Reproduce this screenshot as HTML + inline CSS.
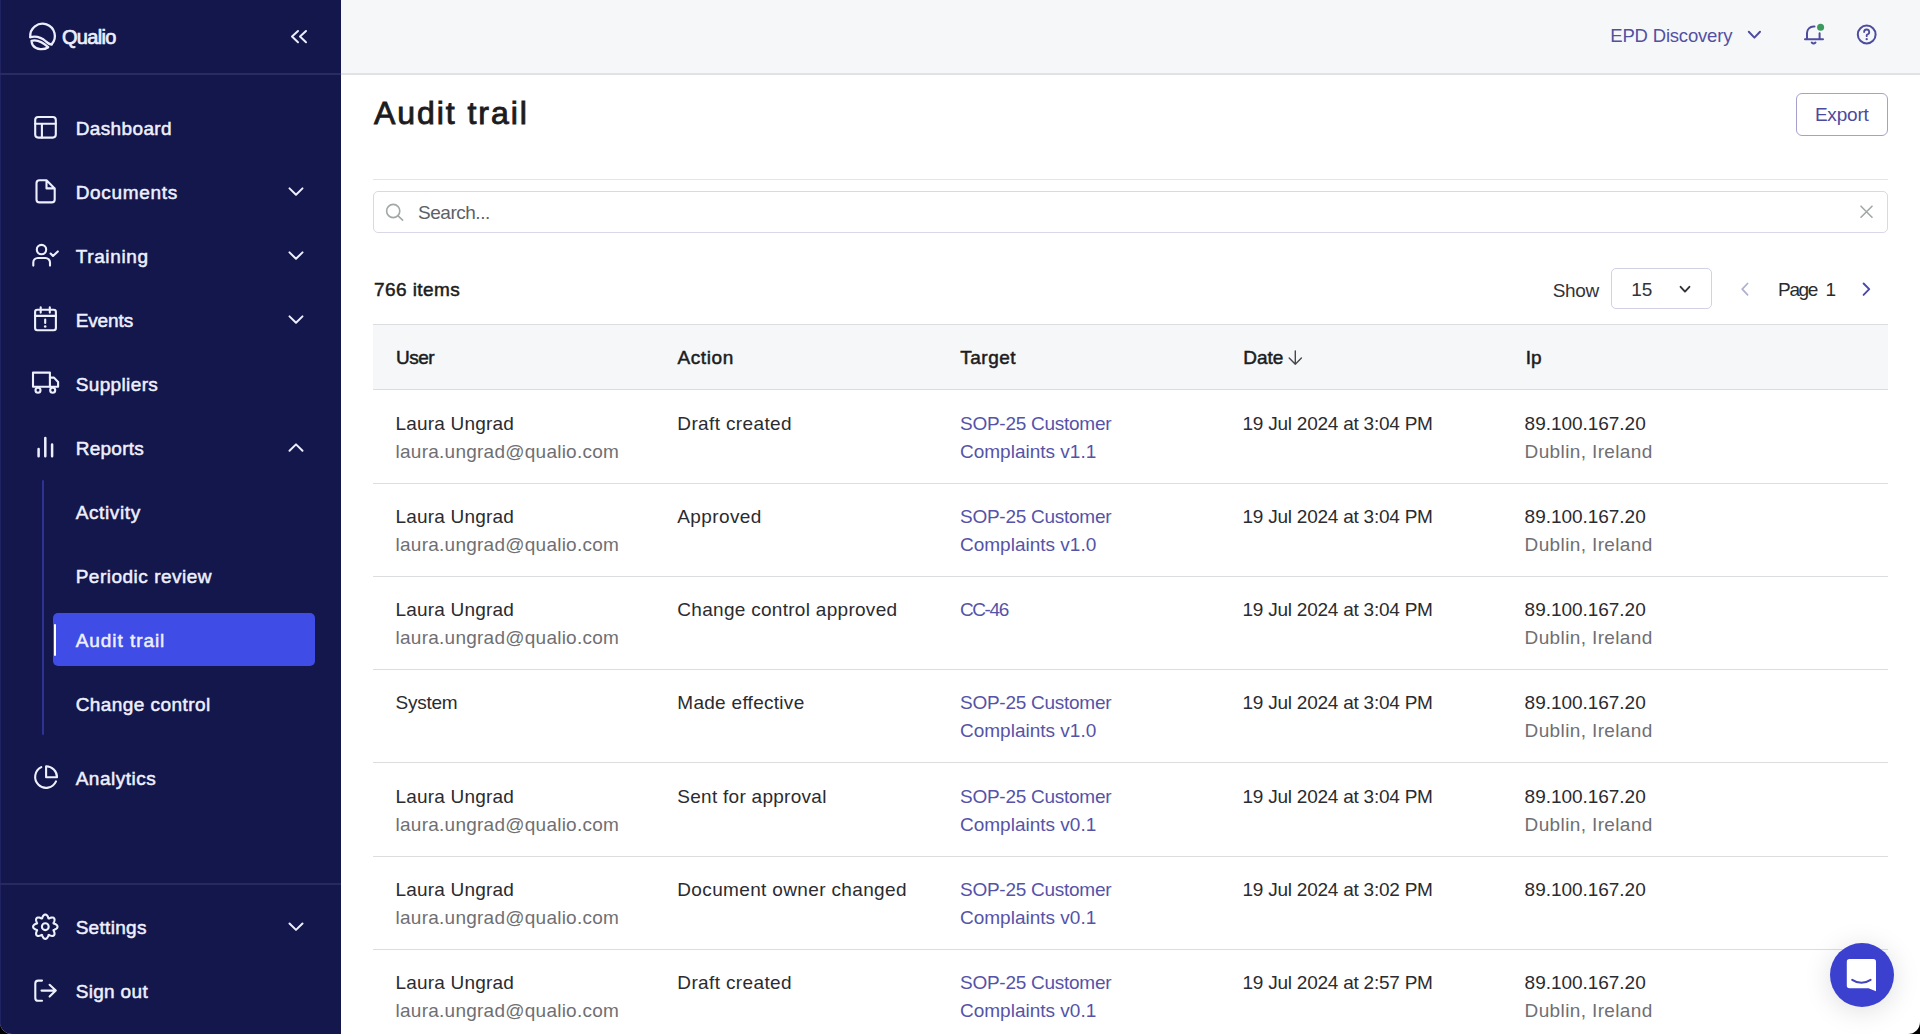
<!DOCTYPE html><html><head><meta charset="utf-8"><title>Audit trail</title><style>
*{margin:0;padding:0;box-sizing:border-box}
html,body{width:1920px;height:1034px;overflow:hidden;background:#000}
body{font-family:"Liberation Sans",sans-serif;position:relative}
#app{position:absolute;left:0;top:0;width:1920px;height:1034px;background:#fff;border-radius:0 0 12px 12px;overflow:hidden}
.t{position:absolute;white-space:nowrap}
.abs{position:absolute}
svg{position:absolute;overflow:visible}
</style></head><body><div id="app">
<div class="abs" style="left:0;top:0;width:341px;height:1034px;background:#14174b"></div>
<div class="abs" style="left:0;top:0;width:1px;height:1034px;background:#1f2362"></div>
<div class="abs" style="left:0;top:73px;width:341px;height:2px;background:#292c61"></div>
<div class="abs" style="left:0;top:883px;width:341px;height:2px;background:#262a5e"></div>
<svg style="left:0;top:0" width="341" height="80" viewBox="0 0 341 80">
<g fill="none" stroke="#eceeff" stroke-width="2.3" stroke-linecap="round" stroke-linejoin="round">
<path d="M30.3,37.2 A12.3,12.3 0 1 1 51.6,44.4"/>
<path d="M30.3,37.2 C36,35.8 42,38 46,41.5 C48.5,43.5 50.5,44.6 51.6,44.4"/>
<path d="M31.5,40.8 C35,39.8 41,40.6 48.2,47.2 C44,50.2 36.5,50 33,45.5 C32,44 31.6,42.5 31.5,40.8 Z"/>
</g></svg>
<div class="t" style="left:61.95px;top:24.07px;font-size:20px;line-height:26px;font-weight:400;color:#eceeff;letter-spacing:-0.680px;-webkit-text-stroke:0.7px #eceeff;">Qualio</div>
<svg style="left:0;top:0" width="341" height="80" viewBox="0 0 341 80">
<g fill="none" stroke="#eceeff" stroke-width="2" stroke-linecap="round" stroke-linejoin="round">
<path d="M298,31 L292,36.6 L298,42.2"/><path d="M306,31 L300,36.6 L306,42.2"/>
</g></svg>
<div class="t" style="left:75.65px;top:116.31px;font-size:19px;line-height:25px;font-weight:400;color:#eef0ff;letter-spacing:0.375px;-webkit-text-stroke:0.5px #eef0ff;">Dashboard</div>
<div class="t" style="left:75.65px;top:180.31px;font-size:19px;line-height:25px;font-weight:400;color:#eef0ff;letter-spacing:0.675px;-webkit-text-stroke:0.5px #eef0ff;">Documents</div>
<svg style="left:0;top:0" width="341" height="1034"><path d="M289.5,188.4 L296,194.8 L302.5,188.4" fill="none" stroke="#eef0ff" stroke-width="2" stroke-linecap="round" stroke-linejoin="round"/></svg>
<div class="t" style="left:75.65px;top:244.31px;font-size:19px;line-height:25px;font-weight:400;color:#eef0ff;letter-spacing:0.643px;-webkit-text-stroke:0.5px #eef0ff;">Training</div>
<svg style="left:0;top:0" width="341" height="1034"><path d="M289.5,252.4 L296,258.8 L302.5,252.4" fill="none" stroke="#eef0ff" stroke-width="2" stroke-linecap="round" stroke-linejoin="round"/></svg>
<div class="t" style="left:75.65px;top:308.31px;font-size:19px;line-height:25px;font-weight:400;color:#eef0ff;letter-spacing:-0.120px;-webkit-text-stroke:0.5px #eef0ff;">Events</div>
<svg style="left:0;top:0" width="341" height="1034"><path d="M289.5,316.4 L296,322.8 L302.5,316.4" fill="none" stroke="#eef0ff" stroke-width="2" stroke-linecap="round" stroke-linejoin="round"/></svg>
<div class="t" style="left:75.65px;top:372.31px;font-size:19px;line-height:25px;font-weight:400;color:#eef0ff;letter-spacing:0.375px;-webkit-text-stroke:0.5px #eef0ff;">Suppliers</div>
<div class="t" style="left:75.65px;top:436.31px;font-size:19px;line-height:25px;font-weight:400;color:#eef0ff;letter-spacing:0.283px;-webkit-text-stroke:0.5px #eef0ff;">Reports</div>
<svg style="left:0;top:0" width="341" height="1034"><path d="M289.5,450.8 L296,444.4 L302.5,450.8" fill="none" stroke="#eef0ff" stroke-width="2" stroke-linecap="round" stroke-linejoin="round"/></svg>
<div class="t" style="left:75.65px;top:766.31px;font-size:19px;line-height:25px;font-weight:400;color:#eef0ff;letter-spacing:0.525px;-webkit-text-stroke:0.5px #eef0ff;">Analytics</div>
<div class="t" style="left:75.65px;top:915.41px;font-size:19px;line-height:25px;font-weight:400;color:#eef0ff;letter-spacing:0.300px;-webkit-text-stroke:0.5px #eef0ff;">Settings</div>
<svg style="left:0;top:0" width="341" height="1034"><path d="M289.5,923.5 L296,929.9 L302.5,923.5" fill="none" stroke="#eef0ff" stroke-width="2" stroke-linecap="round" stroke-linejoin="round"/></svg>
<div class="t" style="left:75.65px;top:979.31px;font-size:19px;line-height:25px;font-weight:400;color:#eef0ff;letter-spacing:0.329px;-webkit-text-stroke:0.5px #eef0ff;">Sign out</div>
<svg style="left:0;top:0" width="341" height="1034"><g fill="none" stroke="#eef0ff" stroke-width="2.1" stroke-linecap="round" stroke-linejoin="round">
<!-- dashboard -->
<rect x="35.2" y="117" width="20.6" height="20.6" rx="3"/><path d="M35.2,123.7 H55.8 M41.9,123.7 V137.6"/>
<!-- documents -->
<path d="M46.5,180.2 H39.5 A3,3 0 0 0 36.5,183.2 V199.4 A3,3 0 0 0 39.5,202.4 H51.7 A3,3 0 0 0 54.7,199.4 V188.4 Z M46.5,180.2 V188.4 H54.7"/>
<!-- training -->
<circle cx="41.5" cy="249.6" r="4.7"/><path d="M33.3,265.6 V262.6 A4.6,4.6 0 0 1 37.9,258 H45.4 A4.6,4.6 0 0 1 50,262.6 V265.6"/><path d="M50.6,253.5 L53,256 L57.8,251.4"/>
<!-- events -->
<rect x="35.1" y="309.8" width="20.8" height="20.4" rx="2.2"/><path d="M35.1,315.9 H55.9 M40.7,307.2 V312.6 M49.8,307.2 V312.6 M45.2,319.5 V323"/></g><circle cx="45.2" cy="326.5" r="1.3" fill="#eef0ff"/><g fill="none" stroke="#eef0ff" stroke-width="2.1" stroke-linecap="round" stroke-linejoin="round">
<!-- truck -->
<path d="M33,372.6 H49.9 V386.7 H33 Z"/><path d="M49.9,377.6 H54 L58.1,382 V386.7 H49.9"/><circle cx="38" cy="390.2" r="2.5" fill="#14174b"/><circle cx="52.7" cy="390.2" r="2.5" fill="#14174b"/>
<!-- bars -->
<path d="M38.6,449 V456.2 M45.3,438 V456.2 M52.1,444.6 V456.2" stroke-width="2.5"/>
<!-- pie -->
<path d="M41.3,767.1 A10.9,10.9 0 1 0 56,781.4"/><path d="M46.1,766.3 V777.2 H57 A10.9,10.9 0 0 0 46.1,766.3 Z"/>
<!-- signout -->
<path d="M42,980.6 H38.2 A2.9,2.9 0 0 0 35.3,983.5 V997.9 A2.9,2.9 0 0 0 38.2,1000.8 H42"/><path d="M41.5,990.6 H55.8 M49.6,984.8 L55.8,990.6 L49.6,996.6"/>
</g></svg>
<svg style="left:0;top:0" width="341" height="1034"><path d="M45.30,914.50 L45.93,914.61 L46.54,914.92 L47.09,915.43 L47.56,916.08 L47.95,916.82 L48.25,917.61 L48.50,918.36 L48.93,918.54 L49.64,918.19 L50.41,917.85 L51.22,917.59 L52.01,917.47 L52.75,917.50 L53.40,917.70 L53.93,918.07 L54.30,918.60 L54.50,919.25 L54.53,919.99 L54.41,920.78 L54.15,921.59 L53.81,922.36 L53.46,923.07 L53.64,923.50 L54.39,923.75 L55.18,924.05 L55.92,924.44 L56.57,924.91 L57.08,925.46 L57.39,926.07 L57.50,926.70 L57.39,927.33 L57.08,927.94 L56.57,928.49 L55.92,928.96 L55.18,929.35 L54.39,929.65 L53.64,929.90 L53.46,930.33 L53.81,931.04 L54.15,931.81 L54.41,932.62 L54.53,933.41 L54.50,934.15 L54.30,934.80 L53.93,935.33 L53.40,935.70 L52.75,935.90 L52.01,935.93 L51.22,935.81 L50.41,935.55 L49.64,935.21 L48.93,934.86 L48.50,935.04 L48.25,935.79 L47.95,936.58 L47.56,937.32 L47.09,937.97 L46.54,938.48 L45.93,938.79 L45.30,938.90 L44.67,938.79 L44.06,938.48 L43.51,937.97 L43.04,937.32 L42.65,936.58 L42.35,935.79 L42.10,935.04 L41.67,934.86 L40.96,935.21 L40.19,935.55 L39.38,935.81 L38.59,935.93 L37.85,935.90 L37.20,935.70 L36.67,935.33 L36.30,934.80 L36.10,934.15 L36.07,933.41 L36.19,932.62 L36.45,931.81 L36.79,931.04 L37.14,930.33 L36.96,929.90 L36.21,929.65 L35.42,929.35 L34.68,928.96 L34.03,928.49 L33.52,927.94 L33.21,927.33 L33.10,926.70 L33.21,926.07 L33.52,925.46 L34.03,924.91 L34.68,924.44 L35.42,924.05 L36.21,923.75 L36.96,923.50 L37.14,923.07 L36.79,922.36 L36.45,921.59 L36.19,920.78 L36.07,919.99 L36.10,919.25 L36.30,918.60 L36.67,918.07 L37.20,917.70 L37.85,917.50 L38.59,917.47 L39.38,917.59 L40.19,917.85 L40.96,918.19 L41.67,918.54 L42.10,918.36 L42.35,917.61 L42.65,916.82 L43.04,916.08 L43.51,915.43 L44.06,914.92 L44.67,914.61 L45.30,914.50Z" fill="none" stroke="#eef0ff" stroke-width="2.1" stroke-linejoin="round"/><circle cx="45.3" cy="926.7" r="3.4" fill="none" stroke="#eef0ff" stroke-width="2.1"/></svg>
<div class="abs" style="left:42px;top:480px;width:2px;height:255px;background:#2e3391;border-radius:1px"></div>
<div class="abs" style="left:53px;top:613px;width:262px;height:53px;background:#3f4ce6;border-radius:5px"></div>
<div class="abs" style="left:53.5px;top:623.5px;width:2.4px;height:32px;background:#fff;border-radius:2px"></div>
<div class="t" style="left:75.65px;top:500.31px;font-size:19px;line-height:25px;font-weight:400;color:#eef0ff;letter-spacing:0.629px;-webkit-text-stroke:0.5px #eef0ff;">Activity</div>
<div class="t" style="left:75.65px;top:564.31px;font-size:19px;line-height:25px;font-weight:400;color:#eef0ff;letter-spacing:0.507px;-webkit-text-stroke:0.5px #eef0ff;">Periodic review</div>
<div class="t" style="left:75.65px;top:628.31px;font-size:19px;line-height:25px;font-weight:400;color:#eef0ff;letter-spacing:0.950px;-webkit-text-stroke:0.5px #eef0ff;">Audit trail</div>
<div class="t" style="left:75.65px;top:692.31px;font-size:19px;line-height:25px;font-weight:400;color:#eef0ff;letter-spacing:0.446px;-webkit-text-stroke:0.5px #eef0ff;">Change control</div>
<div class="abs" style="left:341px;top:0;width:1579px;height:73px;background:#f6f7f9"></div>
<div class="abs" style="left:341px;top:73px;width:1579px;height:2px;background:#e1e2e5"></div>
<div class="t" style="left:1610.30px;top:24.19px;font-size:18.5px;line-height:24px;font-weight:400;color:#5250a2;letter-spacing:-0.192px;">EPD Discovery</div>
<svg style="left:0;top:0" width="1920" height="80"><g fill="none" stroke="#4e4c9e" stroke-width="2" stroke-linecap="round" stroke-linejoin="round">
<path d="M1748.8,31.8 L1754.4,37.6 L1760,31.8"/>
<path d="M1805,39.3 H1823 M1807,39.3 V33 A6.6,6.6 0 0 1 1813.6,26.4 H1814.5 M1819.6,33.3 V39.3"/>
<path d="M1811.7,42.6 Q1813.6,44.4 1815.5,42.6"/>
<circle cx="1866.7" cy="34.5" r="8.9"/>
<path d="M1864.1,32 A2.55,2.55 0 1 1 1867.3,34.5 L1866.7,35.1 V36.2" stroke-width="1.8"/>
</g><circle cx="1866.7" cy="39.2" r="1.15" fill="#4e4c9e"/><circle cx="1820.6" cy="27.3" r="3.5" fill="#3d9a5f"/></svg>
<div class="t" style="left:373.95px;top:91.81px;font-size:32px;line-height:42px;font-weight:400;color:#1c1c20;letter-spacing:1.950px;-webkit-text-stroke:0.9px #1c1c20;">Audit trail</div>
<div class="abs" style="left:1796px;top:93px;width:92px;height:43px;border:1.5px solid #a4a2cc;border-radius:6px"></div>
<div class="t" style="left:1814.90px;top:101.91px;font-size:19px;line-height:25px;font-weight:400;color:#4c4a9e;letter-spacing:-0.200px;">Export</div>
<div class="abs" style="left:373px;top:179px;width:1515px;height:1px;background:#e4e5e7"></div>
<div class="abs" style="left:373px;top:191px;width:1515px;height:42px;border:1px solid #d9d8e9;border-radius:5px"></div>
<svg style="left:0;top:0" width="1920" height="300"><g fill="none" stroke="#a3a7a7" stroke-width="1.6" stroke-linecap="round">
<circle cx="393.2" cy="211" r="6.6"/><path d="M398.1,215.9 L402.6,220.2"/>
<path d="M1861,206.2 L1872,217.2 M1872,206.2 L1861,217.2"/></g></svg>
<div class="t" style="left:418.00px;top:199.91px;font-size:19px;line-height:25px;font-weight:400;color:#5d6165;letter-spacing:-0.475px;">Search...</div>
<div class="t" style="left:373.95px;top:277.41px;font-size:19px;line-height:25px;font-weight:400;color:#1c1c20;letter-spacing:0.438px;-webkit-text-stroke:0.5px #1c1c20;">766 items</div>
<div class="t" style="left:1552.70px;top:277.51px;font-size:19px;line-height:25px;font-weight:400;color:#333338;letter-spacing:-0.333px;">Show</div>
<div class="abs" style="left:1611px;top:268px;width:101px;height:41px;border:1px solid #d2d1e6;border-radius:5px"></div>
<div class="t" style="left:1631.20px;top:277.41px;font-size:19px;line-height:25px;font-weight:400;color:#333338;letter-spacing:0.000px;">15</div>
<svg style="left:0;top:0" width="1920" height="320"><g fill="none" stroke-linecap="round" stroke-linejoin="round">
<path d="M1680.6,286.8 L1685,291.6 L1689.4,286.8" stroke="#333338" stroke-width="1.9"/>
<path d="M1747.6,283.5 L1742.2,289.2 L1747.6,294.9" stroke="#aeb0d2" stroke-width="1.7"/>
<path d="M1863.6,283.5 L1869.2,289.2 L1863.6,294.9" stroke="#4a48a8" stroke-width="1.9"/>
</g></svg>
<div class="t" style="left:1778.10px;top:277.01px;font-size:19px;line-height:25px;font-weight:400;color:#2a2a2e;letter-spacing:-1.367px;">Page</div>
<div class="t" style="left:1825.60px;top:277.01px;font-size:19px;line-height:25px;font-weight:400;color:#2a2a2e;letter-spacing:0.000px;">1</div>
<div class="abs" style="left:373px;top:324px;width:1515px;height:66px;background:#f6f7f9;border-top:1px solid #dcdde0;border-bottom:1px solid #dcdde0"></div>
<div class="t" style="left:396.05px;top:345.31px;font-size:19px;line-height:25px;font-weight:400;color:#1c1c20;letter-spacing:-0.500px;-webkit-text-stroke:0.5px #1c1c20;">User</div>
<div class="t" style="left:677.45px;top:345.31px;font-size:19px;line-height:25px;font-weight:400;color:#1c1c20;letter-spacing:0.600px;-webkit-text-stroke:0.5px #1c1c20;">Action</div>
<div class="t" style="left:960.25px;top:345.31px;font-size:19px;line-height:25px;font-weight:400;color:#1c1c20;letter-spacing:0.500px;-webkit-text-stroke:0.5px #1c1c20;">Target</div>
<div class="t" style="left:1243.35px;top:345.31px;font-size:19px;line-height:25px;font-weight:400;color:#1c1c20;letter-spacing:-0.067px;-webkit-text-stroke:0.5px #1c1c20;">Date</div>
<div class="t" style="left:1525.85px;top:345.31px;font-size:19px;line-height:25px;font-weight:400;color:#1c1c20;letter-spacing:0.000px;-webkit-text-stroke:0.5px #1c1c20;">Ip</div>
<svg style="left:0;top:0" width="1920" height="400"><g fill="none" stroke="#48484c" stroke-width="1.4" stroke-linecap="round" stroke-linejoin="round">
<path d="M1295.3,351 V364.2 M1289.2,358 L1295.3,364.2 L1301.4,358"/></g></svg>
<div class="t" style="left:395.60px;top:410.61px;font-size:19px;line-height:25px;font-weight:400;color:#2b2b30;letter-spacing:0.182px;">Laura Ungrad</div>
<div class="t" style="left:395.60px;top:438.61px;font-size:19px;line-height:25px;font-weight:400;color:#6f6f73;letter-spacing:0.245px;">laura.ungrad@qualio.com</div>
<div class="t" style="left:677.30px;top:410.61px;font-size:19px;line-height:25px;font-weight:400;color:#2b2b30;letter-spacing:0.367px;">Draft created</div>
<div class="t" style="left:960.00px;top:410.61px;font-size:19px;line-height:25px;font-weight:400;color:#5553a8;letter-spacing:-0.264px;">SOP-25 Customer</div>
<div class="t" style="left:960.00px;top:438.61px;font-size:19px;line-height:25px;font-weight:400;color:#5553a8;letter-spacing:0.000px;">Complaints v1.1</div>
<div class="t" style="left:1242.50px;top:410.61px;font-size:19px;line-height:25px;font-weight:400;color:#2b2b30;letter-spacing:-0.238px;">19 Jul 2024 at 3:04 PM</div>
<div class="t" style="left:1524.60px;top:410.61px;font-size:19px;line-height:25px;font-weight:400;color:#2b2b30;letter-spacing:-0.033px;">89.100.167.20</div>
<div class="t" style="left:1524.60px;top:438.61px;font-size:19px;line-height:25px;font-weight:400;color:#6f6f73;letter-spacing:0.371px;">Dublin, Ireland</div>
<div class="abs" style="left:373px;top:483px;width:1515px;height:1px;background:#dcdddf"></div>
<div class="t" style="left:395.60px;top:503.86px;font-size:19px;line-height:25px;font-weight:400;color:#2b2b30;letter-spacing:0.182px;">Laura Ungrad</div>
<div class="t" style="left:395.60px;top:531.86px;font-size:19px;line-height:25px;font-weight:400;color:#6f6f73;letter-spacing:0.245px;">laura.ungrad@qualio.com</div>
<div class="t" style="left:677.30px;top:503.86px;font-size:19px;line-height:25px;font-weight:400;color:#2b2b30;letter-spacing:0.386px;">Approved</div>
<div class="t" style="left:960.00px;top:503.86px;font-size:19px;line-height:25px;font-weight:400;color:#5553a8;letter-spacing:-0.264px;">SOP-25 Customer</div>
<div class="t" style="left:960.00px;top:531.86px;font-size:19px;line-height:25px;font-weight:400;color:#5553a8;letter-spacing:0.000px;">Complaints v1.0</div>
<div class="t" style="left:1242.50px;top:503.86px;font-size:19px;line-height:25px;font-weight:400;color:#2b2b30;letter-spacing:-0.238px;">19 Jul 2024 at 3:04 PM</div>
<div class="t" style="left:1524.60px;top:503.86px;font-size:19px;line-height:25px;font-weight:400;color:#2b2b30;letter-spacing:-0.033px;">89.100.167.20</div>
<div class="t" style="left:1524.60px;top:531.86px;font-size:19px;line-height:25px;font-weight:400;color:#6f6f73;letter-spacing:0.371px;">Dublin, Ireland</div>
<div class="abs" style="left:373px;top:576px;width:1515px;height:1px;background:#dcdddf"></div>
<div class="t" style="left:395.60px;top:597.11px;font-size:19px;line-height:25px;font-weight:400;color:#2b2b30;letter-spacing:0.182px;">Laura Ungrad</div>
<div class="t" style="left:395.60px;top:625.11px;font-size:19px;line-height:25px;font-weight:400;color:#6f6f73;letter-spacing:0.245px;">laura.ungrad@qualio.com</div>
<div class="t" style="left:677.30px;top:597.11px;font-size:19px;line-height:25px;font-weight:400;color:#2b2b30;letter-spacing:0.291px;">Change control approved</div>
<div class="t" style="left:960.00px;top:597.11px;font-size:19px;line-height:25px;font-weight:400;color:#5553a8;letter-spacing:-1.425px;">CC-46</div>
<div class="t" style="left:1242.50px;top:597.11px;font-size:19px;line-height:25px;font-weight:400;color:#2b2b30;letter-spacing:-0.238px;">19 Jul 2024 at 3:04 PM</div>
<div class="t" style="left:1524.60px;top:597.11px;font-size:19px;line-height:25px;font-weight:400;color:#2b2b30;letter-spacing:-0.033px;">89.100.167.20</div>
<div class="t" style="left:1524.60px;top:625.11px;font-size:19px;line-height:25px;font-weight:400;color:#6f6f73;letter-spacing:0.371px;">Dublin, Ireland</div>
<div class="abs" style="left:373px;top:669px;width:1515px;height:1px;background:#dcdddf"></div>
<div class="t" style="left:395.60px;top:690.36px;font-size:19px;line-height:25px;font-weight:400;color:#2b2b30;letter-spacing:-0.260px;">System</div>
<div class="t" style="left:677.30px;top:690.36px;font-size:19px;line-height:25px;font-weight:400;color:#2b2b30;letter-spacing:0.285px;">Made effective</div>
<div class="t" style="left:960.00px;top:690.36px;font-size:19px;line-height:25px;font-weight:400;color:#5553a8;letter-spacing:-0.264px;">SOP-25 Customer</div>
<div class="t" style="left:960.00px;top:718.36px;font-size:19px;line-height:25px;font-weight:400;color:#5553a8;letter-spacing:0.000px;">Complaints v1.0</div>
<div class="t" style="left:1242.50px;top:690.36px;font-size:19px;line-height:25px;font-weight:400;color:#2b2b30;letter-spacing:-0.238px;">19 Jul 2024 at 3:04 PM</div>
<div class="t" style="left:1524.60px;top:690.36px;font-size:19px;line-height:25px;font-weight:400;color:#2b2b30;letter-spacing:-0.033px;">89.100.167.20</div>
<div class="t" style="left:1524.60px;top:718.36px;font-size:19px;line-height:25px;font-weight:400;color:#6f6f73;letter-spacing:0.371px;">Dublin, Ireland</div>
<div class="abs" style="left:373px;top:762px;width:1515px;height:1px;background:#dcdddf"></div>
<div class="t" style="left:395.60px;top:783.61px;font-size:19px;line-height:25px;font-weight:400;color:#2b2b30;letter-spacing:0.182px;">Laura Ungrad</div>
<div class="t" style="left:395.60px;top:811.61px;font-size:19px;line-height:25px;font-weight:400;color:#6f6f73;letter-spacing:0.245px;">laura.ungrad@qualio.com</div>
<div class="t" style="left:677.30px;top:783.61px;font-size:19px;line-height:25px;font-weight:400;color:#2b2b30;letter-spacing:0.275px;">Sent for approval</div>
<div class="t" style="left:960.00px;top:783.61px;font-size:19px;line-height:25px;font-weight:400;color:#5553a8;letter-spacing:-0.264px;">SOP-25 Customer</div>
<div class="t" style="left:960.00px;top:811.61px;font-size:19px;line-height:25px;font-weight:400;color:#5553a8;letter-spacing:0.000px;">Complaints v0.1</div>
<div class="t" style="left:1242.50px;top:783.61px;font-size:19px;line-height:25px;font-weight:400;color:#2b2b30;letter-spacing:-0.238px;">19 Jul 2024 at 3:04 PM</div>
<div class="t" style="left:1524.60px;top:783.61px;font-size:19px;line-height:25px;font-weight:400;color:#2b2b30;letter-spacing:-0.033px;">89.100.167.20</div>
<div class="t" style="left:1524.60px;top:811.61px;font-size:19px;line-height:25px;font-weight:400;color:#6f6f73;letter-spacing:0.371px;">Dublin, Ireland</div>
<div class="abs" style="left:373px;top:856px;width:1515px;height:1px;background:#dcdddf"></div>
<div class="t" style="left:395.60px;top:876.86px;font-size:19px;line-height:25px;font-weight:400;color:#2b2b30;letter-spacing:0.182px;">Laura Ungrad</div>
<div class="t" style="left:395.60px;top:904.86px;font-size:19px;line-height:25px;font-weight:400;color:#6f6f73;letter-spacing:0.245px;">laura.ungrad@qualio.com</div>
<div class="t" style="left:677.30px;top:876.86px;font-size:19px;line-height:25px;font-weight:400;color:#2b2b30;letter-spacing:0.352px;">Document owner changed</div>
<div class="t" style="left:960.00px;top:876.86px;font-size:19px;line-height:25px;font-weight:400;color:#5553a8;letter-spacing:-0.264px;">SOP-25 Customer</div>
<div class="t" style="left:960.00px;top:904.86px;font-size:19px;line-height:25px;font-weight:400;color:#5553a8;letter-spacing:0.000px;">Complaints v0.1</div>
<div class="t" style="left:1242.50px;top:876.86px;font-size:19px;line-height:25px;font-weight:400;color:#2b2b30;letter-spacing:-0.238px;">19 Jul 2024 at 3:02 PM</div>
<div class="t" style="left:1524.60px;top:876.86px;font-size:19px;line-height:25px;font-weight:400;color:#2b2b30;letter-spacing:-0.033px;">89.100.167.20</div>
<div class="abs" style="left:373px;top:949px;width:1515px;height:1px;background:#dcdddf"></div>
<div class="t" style="left:395.60px;top:970.11px;font-size:19px;line-height:25px;font-weight:400;color:#2b2b30;letter-spacing:0.182px;">Laura Ungrad</div>
<div class="t" style="left:395.60px;top:998.11px;font-size:19px;line-height:25px;font-weight:400;color:#6f6f73;letter-spacing:0.245px;">laura.ungrad@qualio.com</div>
<div class="t" style="left:677.30px;top:970.11px;font-size:19px;line-height:25px;font-weight:400;color:#2b2b30;letter-spacing:0.367px;">Draft created</div>
<div class="t" style="left:960.00px;top:970.11px;font-size:19px;line-height:25px;font-weight:400;color:#5553a8;letter-spacing:-0.264px;">SOP-25 Customer</div>
<div class="t" style="left:960.00px;top:998.11px;font-size:19px;line-height:25px;font-weight:400;color:#5553a8;letter-spacing:0.000px;">Complaints v0.1</div>
<div class="t" style="left:1242.50px;top:970.11px;font-size:19px;line-height:25px;font-weight:400;color:#2b2b30;letter-spacing:-0.238px;">19 Jul 2024 at 2:57 PM</div>
<div class="t" style="left:1524.60px;top:970.11px;font-size:19px;line-height:25px;font-weight:400;color:#2b2b30;letter-spacing:-0.033px;">89.100.167.20</div>
<div class="t" style="left:1524.60px;top:998.11px;font-size:19px;line-height:25px;font-weight:400;color:#6f6f73;letter-spacing:0.371px;">Dublin, Ireland</div>
<div class="abs" style="left:1829.5px;top:943.3px;width:64px;height:64px;border-radius:50%;background:#3b40cf;box-shadow:0 4px 28px rgba(0,0,0,0.13)"></div>
<svg style="left:0;top:0" width="1920" height="1034"><path d="M1849.5,959 H1873.3 A2.7,2.7 0 0 1 1876,961.7 V991.3 L1868.5,988.2 H1849.5 A2.7,2.7 0 0 1 1846.8,985.5 V961.7 A2.7,2.7 0 0 1 1849.5,959 Z" fill="#fff"/>
<path d="M1852.2,979.8 Q1861.4,985.8 1870.6,979.8" fill="none" stroke="#4345b8" stroke-width="2" stroke-linecap="round"/></svg>
</div></body></html>
